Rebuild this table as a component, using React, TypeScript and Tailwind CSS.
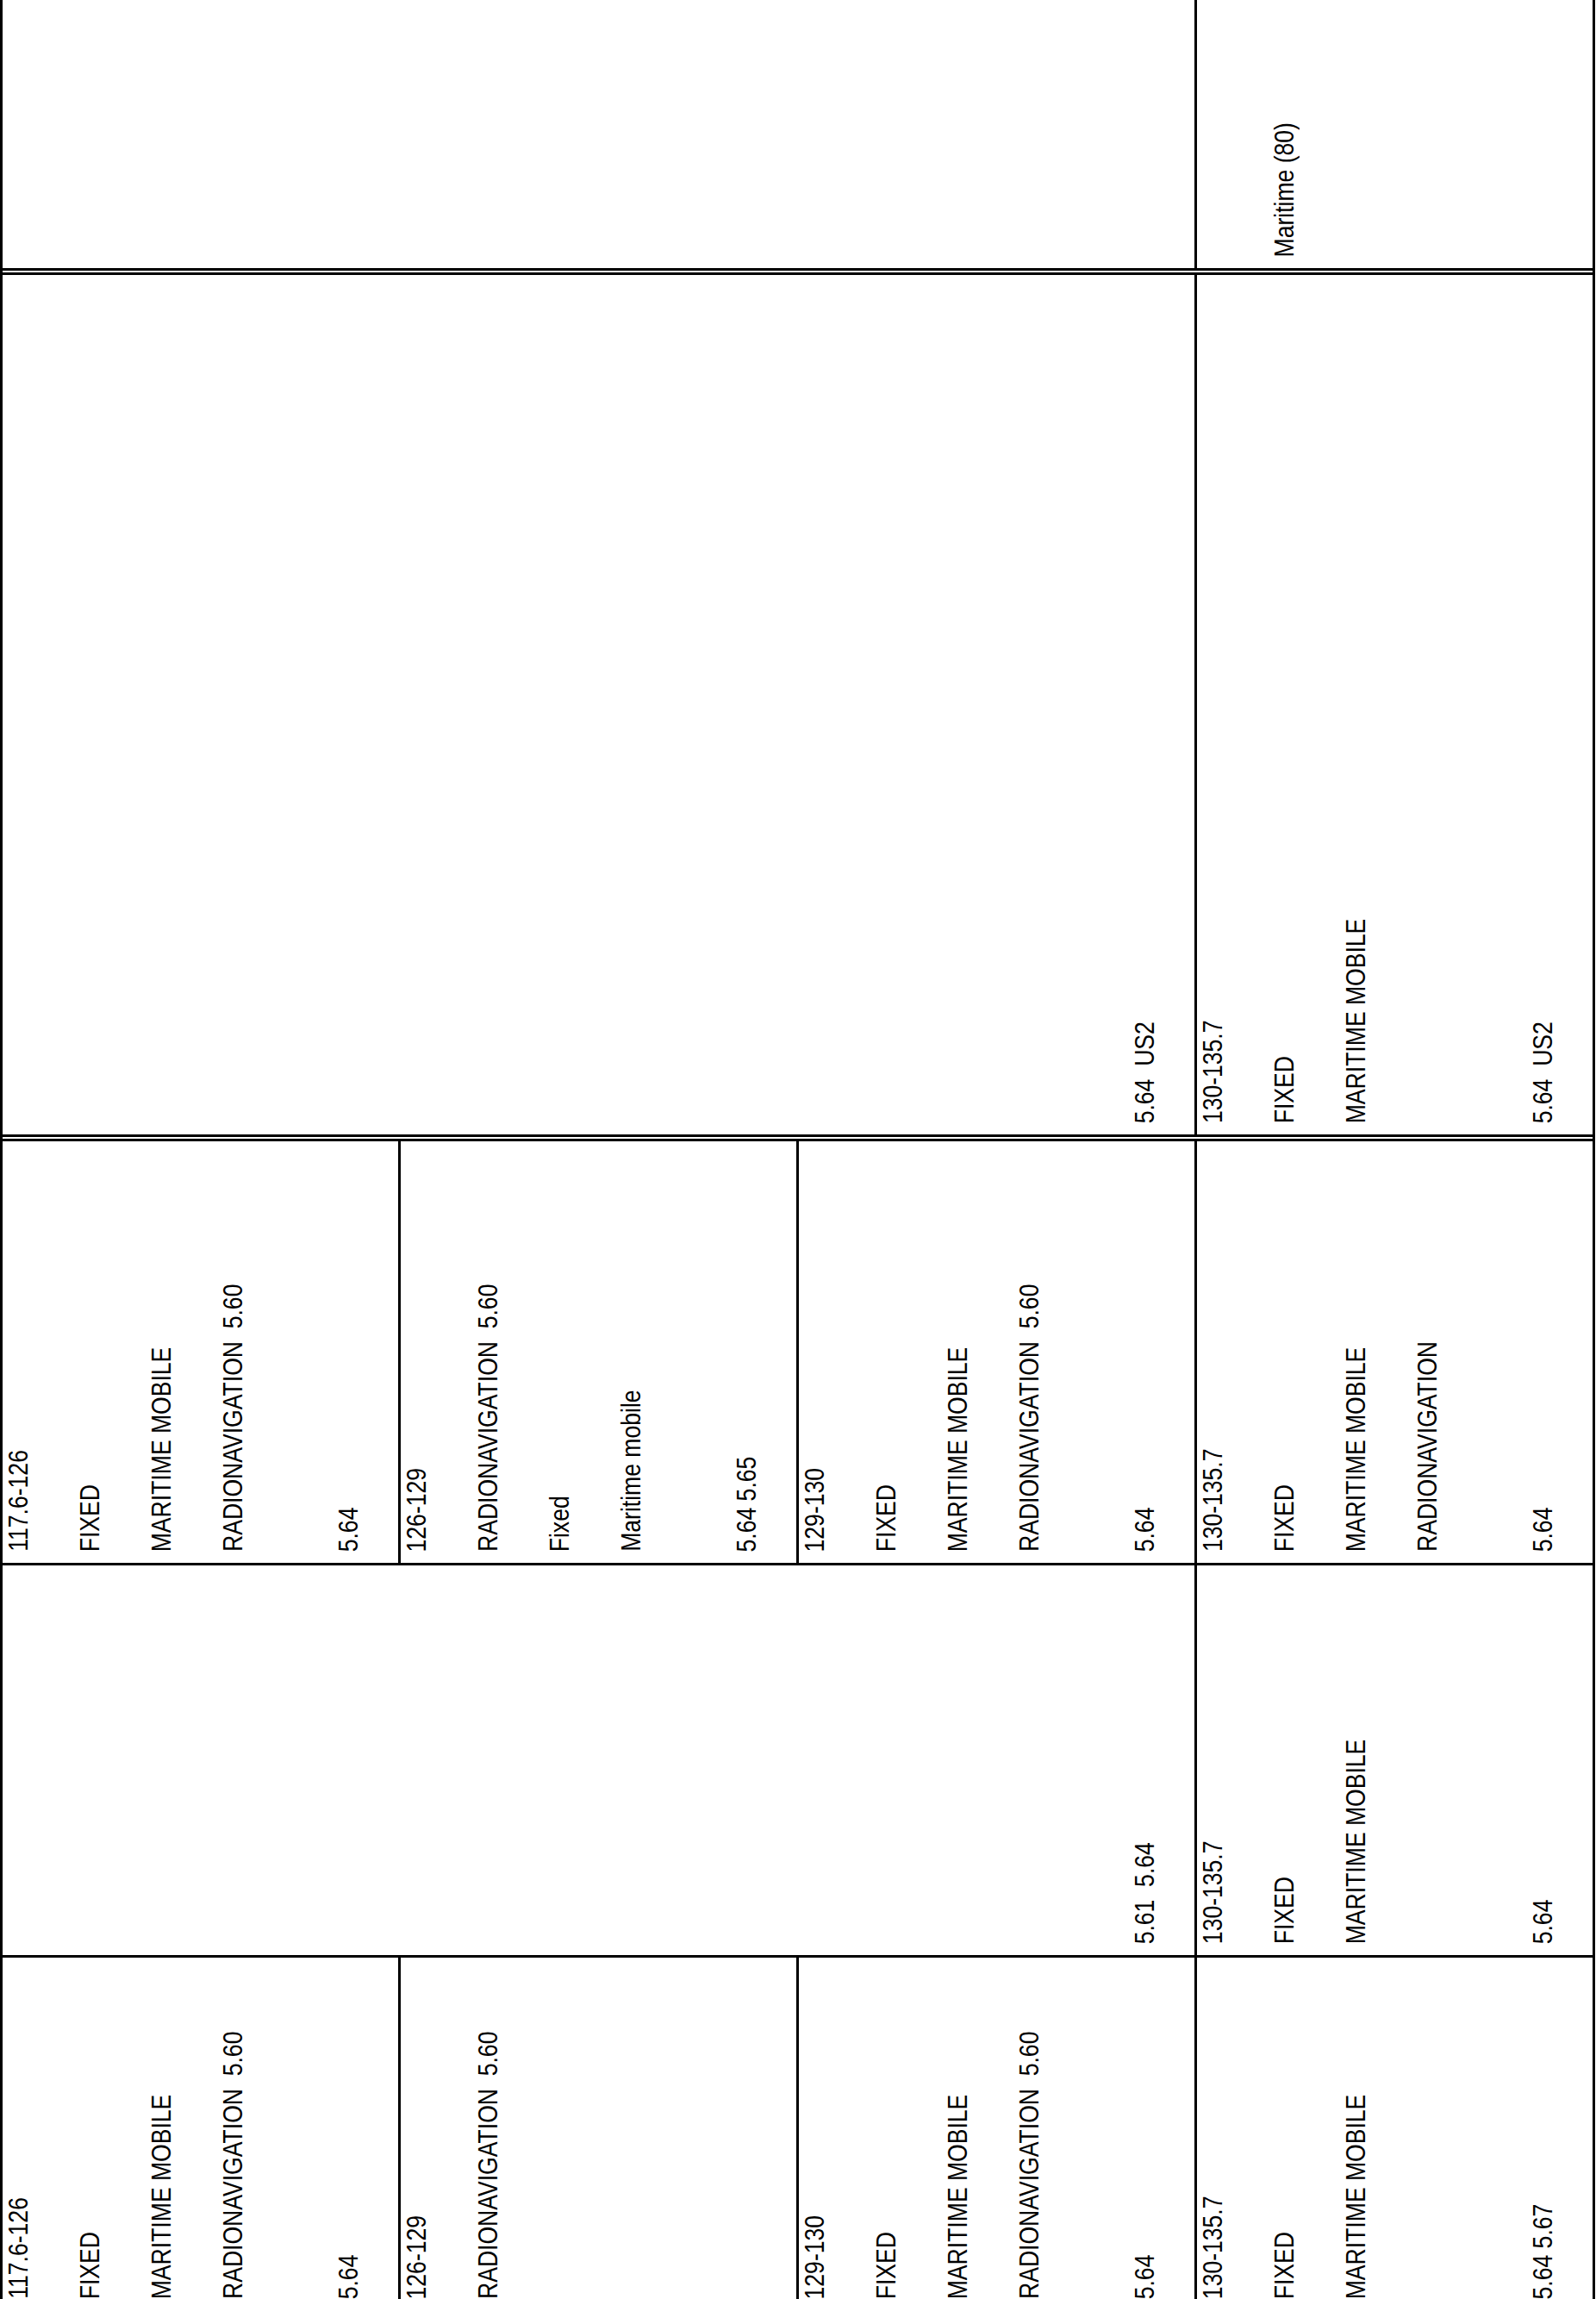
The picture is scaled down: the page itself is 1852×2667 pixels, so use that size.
type CellProps = {
  lines?: string[]
  note?: string
  className?: string
}

// the scan uses a narrow face, so the sideways text is squeezed along its length
function Text({ t }: { t: string }) {
  return (
    <div className="w-[32px] shrink-0 origin-bottom scale-y-[0.83]">
      <div className="rotate-180 whitespace-pre text-[32px] leading-[32px] text-black [writing-mode:vertical-rl]">
        {t}
      </div>
    </div>
  )
}

function Cell({ lines = [], note, className = "" }: CellProps) {
  return (
    <div className={`flex h-full items-end pb-[13px] pl-[2px] pr-[42px] ${className}`}>
      <div className="flex items-end gap-[51px]">
        {lines.map((t, i) => (
          <Text key={i} t={t} />
        ))}
      </div>
      {note && (
        <div className="ml-auto">
          <Text t={note} />
        </div>
      )}
    </div>
  )
}

const col = "w-[459px] shrink-0"
const colSep = "w-[462px] shrink-0 border-l-[3px] border-black"
const merged = "w-[1383px] shrink-0"

export default function App() {
  return (
    <div className="h-[2667px] w-[1852px] overflow-hidden bg-white font-['Liberation_Sans','Arial',sans-serif]">
      <div className="flex h-[2680px] w-[1851px] flex-col border-x-[3px] border-black">
        {/* rule part */}
        <div className="flex h-[319px] shrink-0 border-b-[8px] border-double border-black">
          <Cell className={merged} />
          <Cell className={colSep} lines={["", "Maritime (80)"]} />
        </div>

        {/* united states table */}
        <div className="flex h-[1005px] shrink-0 border-b-[8px] border-double border-black">
          <Cell className={merged} note="5.64  US2" />
          <Cell className={colSep} lines={["130-135.7", "FIXED", "MARITIME MOBILE"]} note="5.64  US2" />
        </div>

        {/* region 3 */}
        <div className="flex h-[492px] shrink-0 border-b-[3px] border-black">
          <Cell
            className={col}
            lines={["117.6-126", "FIXED", "MARITIME MOBILE", "RADIONAVIGATION  5.60"]}
            note="5.64"
          />
          <Cell
            className={colSep}
            lines={["126-129", "RADIONAVIGATION  5.60", "Fixed", "Maritime mobile"]}
            note="5.64 5.65"
          />
          <Cell
            className={colSep}
            lines={["129-130", "FIXED", "MARITIME MOBILE", "RADIONAVIGATION  5.60"]}
            note="5.64"
          />
          <Cell
            className={colSep}
            lines={["130-135.7", "FIXED", "MARITIME MOBILE", "RADIONAVIGATION"]}
            note="5.64"
          />
        </div>

        {/* region 2 */}
        <div className="flex h-[455px] shrink-0 border-b-[3px] border-black">
          <Cell className={merged} note="5.61  5.64" />
          <Cell className={colSep} lines={["130-135.7", "FIXED", "MARITIME MOBILE"]} note="5.64" />
        </div>

        {/* region 1 */}
        <div className="flex h-[409px] shrink-0">
          <Cell
            className={col}
            lines={["117.6-126", "FIXED", "MARITIME MOBILE", "RADIONAVIGATION  5.60"]}
            note="5.64"
          />
          <Cell className={colSep} lines={["126-129", "RADIONAVIGATION  5.60"]} />
          <Cell
            className={colSep}
            lines={["129-130", "FIXED", "MARITIME MOBILE", "RADIONAVIGATION  5.60"]}
            note="5.64"
          />
          <Cell className={colSep} lines={["130-135.7", "FIXED", "MARITIME MOBILE"]} note="5.64 5.67" />
        </div>
      </div>
    </div>
  )
}
